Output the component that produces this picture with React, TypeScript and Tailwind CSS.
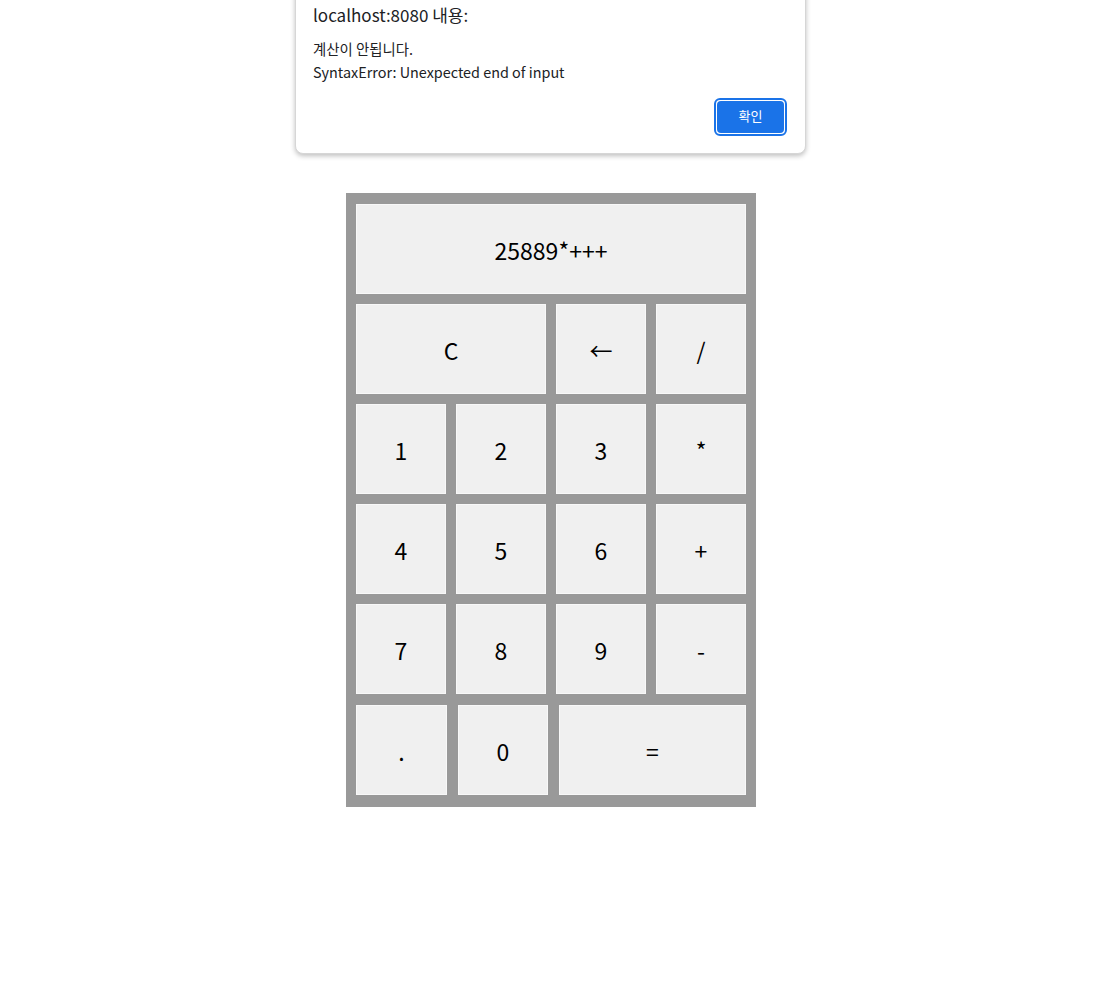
import React from 'react';

const font = { fontFamily: '"Noto Sans CJK KR", "Noto Sans", sans-serif' };

const rows = [
  ['1', '2', '3', '*'],
  ['4', '5', '6', '+'],
  ['7', '8', '9', '-'],
];

function Key({ label, className = '' }: { label: string; className?: string }) {
  return (
    <button
      className={`flex h-[90px] items-center justify-center border border-[#f8f8f8] bg-[#f0f0f0] pt-[3px] text-[23px] text-black ${className}`}
    >
      {label}
    </button>
  );
}

export default function App() {
  return (
    <div className="relative min-h-[1000px] bg-white" style={font}>
      {/* alert dialog */}
      <div className="absolute left-[295px] top-[-8px] w-[511px] rounded-b-[8px] border border-[#d6d6d6] bg-white pb-[17px] pl-[17px] pr-[18px] pt-[10px] shadow-[0_2px_5px_rgba(0,0,0,0.25)]">
        <div className="text-[17px] leading-[24px] text-[#202124]">localhost:8080 내용:</div>
        <div className="mt-[10px] text-[14.4px] leading-[24px] text-[#202124]">계산이 안됩니다.</div>
        <div className="text-[14.4px] leading-[22px] text-[#202124]">SyntaxError: Unexpected end of input</div>
        <div className="mt-[15px] flex justify-end">
          <div className="rounded-[6px] border-2 border-[#1a73e8] bg-white p-px">
            <button className="flex h-[32px] w-[67px] items-center justify-center rounded-[4px] bg-[#1a73e8] pb-[2px] text-[13px] text-white">
              확인
            </button>
          </div>
        </div>
      </div>

      {/* calculator */}
      <div className="flex justify-center pl-[2px] pt-[193px]">
        <div className="w-[410px] bg-[#999999] pb-[12px] pl-[10px] pr-[10px] pt-[11px]">
          <div className="grid grid-cols-4 gap-[10px]">
            <Key label="25889*+++" className="col-span-4" />
            <Key label="C" className="col-span-2" />
            <Key label="←" />
            <Key label="/" />
            {rows.flat().map((k) => (
              <Key key={k} label={k} />
            ))}
          </div>
          <div className="mt-[11px] flex gap-[10px]">
            <Key label="." className="w-[91px]" />
            <Key label="0" className="ml-px w-[90px]" />
            <Key label="=" className="ml-px h-[88px] w-[187px] self-end" />
          </div>
        </div>
      </div>
    </div>
  );
}
